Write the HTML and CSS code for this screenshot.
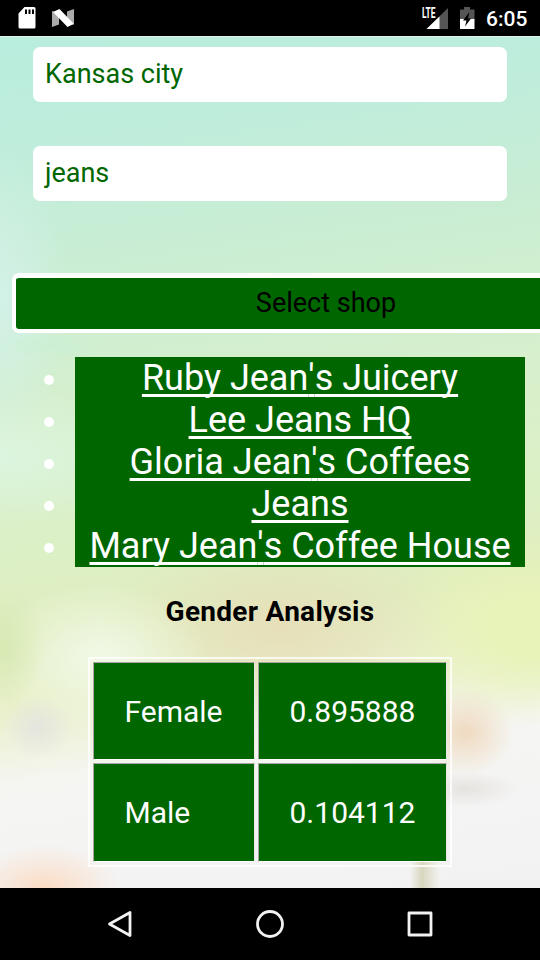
FILE: index.html
```
<!DOCTYPE html>
<html lang="en">
<head>
<meta charset="utf-8">
<title>Select shop</title>
<link rel="stylesheet" href="styles.css">
</head>
<body>
<header class="status">
  <svg class="sd" width="18" height="22" viewBox="0 0 18 22"><path fill="#fff" fill-rule="evenodd" d="M6.500 0H16q1.500 0 1.500 1.500V20q0 1.500-1.500 1.500H2Q.5 21.500.5 20V6.500zM7 2.500V7h2V2.500zM10.500 2.500V7h2V2.500zM14 2.500V7h2V2.500z"/></svg>
  <svg class="nlogo" width="22" height="18" viewBox="0 0 22 18"><path fill="#aaa" d="M0 2l7 2v11.500L0 18zM15 2.500L22 0v15.500l-7 2z"/><path fill="#fff" d="M1 3L7.500 0 21.500 14.500 15.500 18z"/></svg>
  <div class="grow"></div>
  <div class="signal">
    <svg width="27" height="23" viewBox="0 0 27 23"><path fill="#555" d="M27 1v21H5.500z"/><path fill="#fff" d="M18.500 9.500V22h-13z"/></svg>
    <span class="lte">LTE</span>
  </div>
  <svg class="battery" width="15" height="22" viewBox="0 0 15 22"><path fill="#555" d="M4 0h6v2.500h4.500V12H0V2.500h4z"/><path fill="#fff" d="M0 12h14.500v10H0z"/><path fill="#000" d="M9.500 5L3 13.500h3.500L5 19.500l6-8H8z"/></svg>
  <span class="clock">6:05</span>
</header>
<main class="page">
  <div class="field">Kansas city</div>
  <div class="field">jeans</div>
  <div class="select">Select shop</div>
  <ul class="shops">
    <li><a>Ruby Jean<span class="apos">'</span>s Juicery</a></li>
    <li><a>Lee Jeans HQ</a></li>
    <li><a>Gloria Jean<span class="apos">'</span>s Coffees</a></li>
    <li><a>Jeans</a></li>
    <li><a>Mary Jean<span class="apos">'</span>s Coffee House</a></li>
  </ul>
  <h4 class="title">Gender Analysis</h4>
  <div class="table">
    <div class="cell">Female</div><div class="cell">0.895888</div>
    <div class="cell">Male</div><div class="cell">0.104112</div>
  </div>
</main>
<nav class="nav">
  <svg width="28" height="30" viewBox="0 0 28 30"><path d="M3.500 15L24 3.500v23z"/></svg>
  <svg width="28" height="30" viewBox="0 0 28 30"><circle cx="14" cy="15" r="12.500"/></svg>
  <svg width="28" height="30" viewBox="0 0 28 30"><rect x="3" y="4" width="22" height="22"/></svg>
</nav>
</body>
</html>
```
FILE: styles.css
```
* { box-sizing: border-box; }
body {
  margin: 0;
  width: 540px;
  height: 960px;
  overflow: hidden;
  display: flex;
  flex-direction: column;
  background: #000;
  font-family: Roboto, "Liberation Sans", sans-serif;
}
svg { display: block; flex: none; }
.status {
  height: 36px;
  flex: none;
  display: flex;
  align-items: center;
  padding: 0 12px 0 18px;
  color: #fff;
}
.nlogo { margin-left: 16px; }
.grow { flex: 1; }
.signal { position: relative; margin-right: 12px; }
.lte {
  position: absolute;
  left: 1px;
  top: 0;
  font-size: 14px;
  line-height: 12px;
  font-weight: 700;
  transform: scaleX(.6);
  transform-origin: 0 0;
}
.battery { margin-right: 1px; }
.clock {
  margin-left: 10px;
  width: 42px;
  padding-top: 2px;
  font-size: 21px;
  font-weight: 500;
  white-space: nowrap;
}
.page {
  height: 852px;
  flex: none;
  overflow: hidden;
  padding-top: 10px;
  border-top: 1px solid #e2f5ed;
  background:
    radial-gradient(ellipse 75px 45px at 45px 852px, #fbdcc4 0, #fbdcc400 100%),
    radial-gradient(ellipse 50px 45px at 465px 695px, #f0dcc4 10%, #f0dcc400 100%),
    radial-gradient(ellipse 55px 18px at 465px 752px, #e6e3df 0, #e6e3df00 100%),
    linear-gradient(90deg, #d9d6be00 410px, #d9d6be 422px, #d9d6be00 440px) 0 100% / 540px 26px no-repeat,
    radial-gradient(ellipse 55px 12px at 55px 309px, #ccefd4 0, #ccefd400 100%),
    radial-gradient(ellipse 40px 60px at 5px 610px, #d8eab4 0, #d8eab400 100%),
    radial-gradient(ellipse 35px 32px at 38px 690px, #e4e5df 0, #e4e5df00 100%),
    radial-gradient(ellipse 110px 75px at 100px 620px, #f0f8e4 10%, #f0f8e400 100%),
    radial-gradient(ellipse 170px 95px at 280px 590px, #e6dfba 0, #e6dfba00 100%),
    radial-gradient(ellipse 150px 100px at 535px 590px, #e8f3ba 30%, #e8f3ba00 100%),
    radial-gradient(ellipse 70px 150px at 0 260px, #d3f1e8 0, #d3f1e800 100%),
    radial-gradient(ellipse 160px 70px at 0 420px, #dcf5df 0, #dcf5df00 100%),
    linear-gradient(172deg, #b9eddd 0, #bfeddc 12%, #c8edd4 24%, #d0efd0 34%, #d8efcc 44%, #dcf0c6 56%, #e0edbe 66%, #eaf0cc 73%, #f5f6f2 81%, #f4f4f4 90%, #f2f2f2 100%);
}
.field {
  width: 474px;
  height: 55px;
  margin: 0 0 44px 33px;
  padding: 0 12px;
  border-radius: 7px;
  background: #fff;
  color: #060;
  font-size: 27px;
  line-height: 55px;
}
.field + .field { margin-bottom: 72px; }
.select {
  width: 628px;
  height: 60px;
  margin-left: 12px;
  border: 4px solid #fff;
  border-width: 5px 4px 4px 4px;
  border-radius: 7px;
  background: #060;
  text-align: center;
  font-size: 27px;
  line-height: 51px;
}
.shops {
  margin: 24px 15px 0 75px;
  padding: 0;
  background: #060;
  color: #fff;
  font-size: 36px;
  line-height: 42px;
  text-align: center;
  list-style: none;
}
.shops li { position: relative; height: 42px; white-space: nowrap; }
.shops li::before {
  content: "";
  position: absolute;
  left: -31px;
  top: 18px;
  width: 10px;
  height: 10px;
  border-radius: 50%;
  background: #fff;
}
.shops a {
  text-decoration: underline;
  text-decoration-thickness: 3px;
  text-underline-offset: 4px;
  text-decoration-skip-ink: none;
}
.apos { font-kerning: none; }
.title {
  margin: 28px 0 29px;
  font-size: 28px;
  line-height: 33px;
  font-weight: 700;
  letter-spacing: .28px;
  text-align: center;
}
.table {
  display: grid;
  grid-template: 98px 99px / 162px 189px;
  gap: 3px;
  width: 364px;
  margin: 0 auto;
  padding: 3px;
  border: 2px solid #fffc;
}
.cell {
  padding-left: 30.500px;
  border: 1px solid;
  border-color: #a8a4a8 #e8e8e8 #fff #a8a4a8;
  background: #060;
  color: #fff;
  font-size: 30px;
  line-height: 97px;
}
.nav {
  height: 72px;
  flex: none;
  display: flex;
  justify-content: center;
  align-items: center;
  gap: 122px;
}
.nav svg { fill: none; stroke: #f2f2f2; stroke-width: 2.800; stroke-linejoin: round; }
```
